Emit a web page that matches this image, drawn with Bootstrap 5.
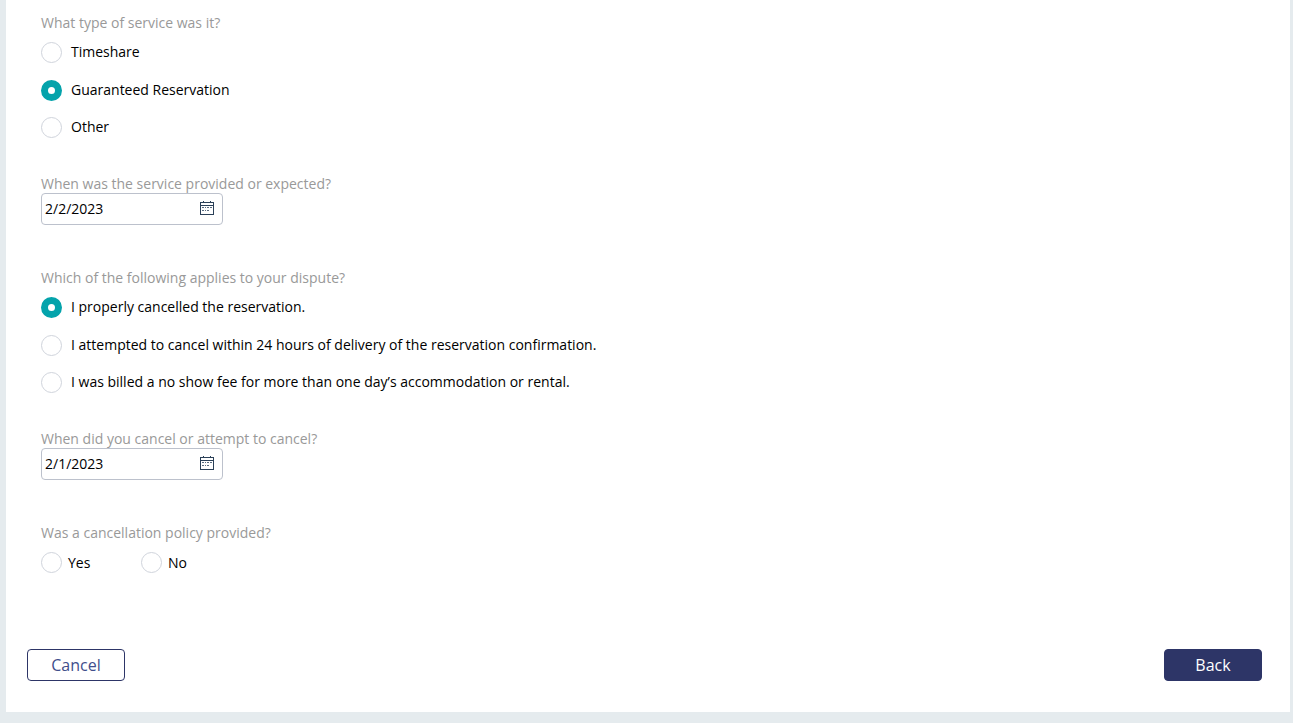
<!DOCTYPE html>
<html lang="en">
<head>
<meta charset="utf-8">
<meta name="viewport" content="width=device-width, initial-scale=1">
<title>Dispute details</title>
<link href="https://cdn.jsdelivr.net/npm/bootstrap@5.3.0/dist/css/bootstrap.min.css" rel="stylesheet">
<style>
  body { background: #e5ebee; color: #000; font-family: "Open Sans", sans-serif; font-size: 14px; line-height: 18px; }
  .page-frame { padding: 0 3px 11px 6px; }
  .panel { background: #fff; padding: 14px 28px 31px 21px; }
  .questions { padding-left: 14px; }
  .question { color: #999; font-size: 14px; line-height: 18px; }
  .radio-set { margin-bottom: 37px; }
  .radio-set legend { margin-bottom: 10px; }
  .choices { min-height: 96px; }
  .choice { gap: 9px; min-height: 21px; padding: 0; margin: 0; }
  .choice label { line-height: 19px; }
  .choice .form-check-input { float: none; flex: none; width: 21px; height: 21px; margin: 0; border: 1px solid #d0d4dc; background-color: #fff; }
  .choice .form-check-input:checked { border: 7px solid #04a3ab; background-image: none; }
  .choice-inline { gap: 6px; min-width: 100px; }
  .choice-inline label { line-height: 21px; }
  .date-set { margin-bottom: 44px; }
  .date-box { width: 182px; height: 32px; padding: 0 8px 0 3px; border: 1px solid #bcc1cc; border-radius: 4px; }
  .date-box input { min-width: 0; font-size: 14px; line-height: 18px; color: #000; }
  .date-box button { padding: 0 0 2px; }
  .date-box svg { display: block; }
  .actions { margin-top: 76px; }
  .btn-form { width: 98px; height: 32px; padding: 0; font-size: 16px; line-height: 30px; border-radius: 4px; }
  .btn-line { --bs-btn-color: #414e8b; --bs-btn-bg: #fff; --bs-btn-border-color: #2d3567; --bs-btn-hover-color: #fff; --bs-btn-hover-bg: #2d3567; }
  .btn-solid { --bs-btn-color: #fff; --bs-btn-bg: #2d3567; --bs-btn-border-color: #2d3567; --bs-btn-hover-color: #fff; --bs-btn-hover-bg: #3c467f; }
</style>
</head>
<body>
<svg class="d-none" aria-hidden="true">
  <symbol id="calendar" viewBox="0 0 14 14">
    <path fill="#2b4058" d="M0 1h14v13H0zM1 2v2h12V2zM1 5v8h12V5z" fill-rule="evenodd"/>
    <path fill="#2b4058" d="M3 0h1v1H3zM10 0h1v1h-1z"/>
    <path fill="#5a6c80" d="M2 6h2v1H2zM5 6h1v1H5zM7 6h2v1H7zM10 6h2v1h-2zM2 9h2v1H2zM5 9h1v1H5zM7 9h2v1H7z"/>
  </symbol>
</svg>
<main class="page-frame">
  <form class="panel">
    <div class="questions">
      <fieldset class="radio-set">
        <legend class="question">What type of service was it?</legend>
        <div class="choices d-flex flex-column justify-content-between">
          <div class="choice form-check d-flex align-items-start">
            <input class="form-check-input" type="radio" name="service" id="timeshare"><label for="timeshare">Timeshare</label>
          </div>
          <div class="choice form-check d-flex align-items-start">
            <input class="form-check-input" type="radio" name="service" id="guaranteed" checked><label for="guaranteed">Guaranteed Reservation</label>
          </div>
          <div class="choice form-check d-flex align-items-start">
            <input class="form-check-input" type="radio" name="service" id="other"><label for="other">Other</label>
          </div>
        </div>
      </fieldset>

      <div class="date-set">
        <label class="question d-block" for="service-date">When was the service provided or expected?</label>
        <div class="date-box d-flex align-items-center">
          <input class="border-0 p-0 flex-grow-1 bg-transparent" type="text" id="service-date" value="2/2/2023">
          <button class="border-0 bg-transparent" type="button" aria-label="Choose service date"><svg width="14" height="14"><use href="#calendar"/></svg></button>
        </div>
      </div>

      <fieldset class="radio-set">
        <legend class="question">Which of the following applies to your dispute?</legend>
        <div class="choices d-flex flex-column justify-content-between">
          <div class="choice form-check d-flex align-items-start">
            <input class="form-check-input" type="radio" name="reason" id="cancelled" checked><label for="cancelled">I properly cancelled the reservation.</label>
          </div>
          <div class="choice form-check d-flex align-items-start">
            <input class="form-check-input" type="radio" name="reason" id="attempted"><label for="attempted">I attempted to cancel within 24 hours of delivery of the reservation confirmation.</label>
          </div>
          <div class="choice form-check d-flex align-items-start">
            <input class="form-check-input" type="radio" name="reason" id="no-show"><label for="no-show">I was billed a no show fee for more than one day’s accommodation or rental.</label>
          </div>
        </div>
      </fieldset>

      <div class="date-set">
        <label class="question d-block" for="cancel-date">When did you cancel or attempt to cancel?</label>
        <div class="date-box d-flex align-items-center">
          <input class="border-0 p-0 flex-grow-1 bg-transparent" type="text" id="cancel-date" value="2/1/2023">
          <button class="border-0 bg-transparent" type="button" aria-label="Choose cancellation date"><svg width="14" height="14"><use href="#calendar"/></svg></button>
        </div>
      </div>

      <fieldset class="radio-set mb-0">
        <legend class="question">Was a cancellation policy provided?</legend>
        <div class="d-flex">
          <div class="choice choice-inline form-check d-flex">
            <input class="form-check-input" type="radio" name="policy" id="policy-yes"><label for="policy-yes">Yes</label>
          </div>
          <div class="choice choice-inline form-check d-flex">
            <input class="form-check-input" type="radio" name="policy" id="policy-no"><label for="policy-no">No</label>
          </div>
        </div>
      </fieldset>
    </div>
    <div class="actions d-flex justify-content-between">
      <button class="btn btn-form btn-line" type="button">Cancel</button>
      <button class="btn btn-form btn-solid" type="button">Back</button>
    </div>
  </form>
</main>
<script src="https://cdn.jsdelivr.net/npm/bootstrap@5.3.0/dist/js/bootstrap.bundle.min.js"></script>
</body>
</html>
